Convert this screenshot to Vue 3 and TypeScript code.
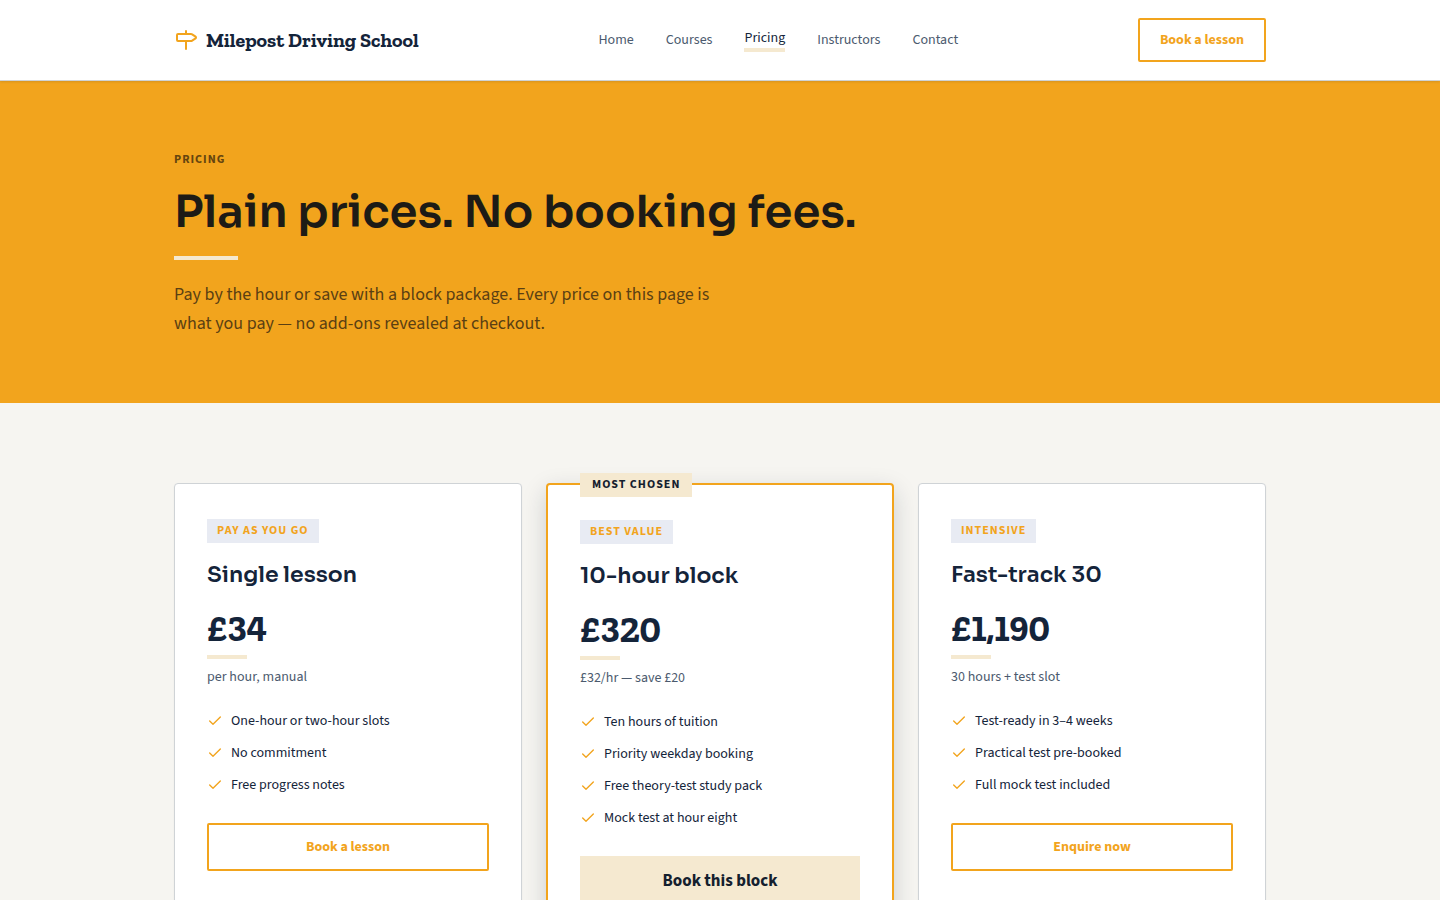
<script setup lang="ts">
interface NavItem {
  label: string
  current?: boolean
}

interface Plan {
  tag: string
  name: string
  price: string
  unit: string
  features: string[]
  action: string
  featured?: boolean
}

const navItems: NavItem[] = [
  { label: 'Home' },
  { label: 'Courses' },
  { label: 'Pricing', current: true },
  { label: 'Instructors' },
  { label: 'Contact' },
]

const plans: Plan[] = [
  {
    tag: 'Pay as you go',
    name: 'Single lesson',
    price: '£34',
    unit: 'per hour, manual',
    features: ['One-hour or two-hour slots', 'No commitment', 'Free progress notes'],
    action: 'Book a lesson',
  },
  {
    tag: 'Best value',
    name: '10-hour block',
    price: '£320',
    unit: '£32/hr — save £20',
    features: [
      'Ten hours of tuition',
      'Priority weekday booking',
      'Free theory-test study pack',
      'Mock test at hour eight',
    ],
    action: 'Book this block',
    featured: true,
  },
  {
    tag: 'Intensive',
    name: 'Fast-track 30',
    price: '£1,190',
    unit: '30 hours + test slot',
    features: ['Test-ready in 3–4 weeks', 'Practical test pre-booked', 'Full mock test included'],
    action: 'Enquire now',
  },
]
</script>

<template>
  <div class="page">
    <header class="site-header">
      <div class="container header-row">
        <a class="brand" href="#">
          <svg class="brand-icon" viewBox="0 0 24 24" aria-hidden="true">
            <path d="M12 13v8" />
            <path d="M12 3v3" />
            <path
              d="M4 6a1 1 0 0 0-1 1v5a1 1 0 0 0 1 1h13a2 2 0 0 0 1.152-.365l3.424-2.317a1 1 0 0 0 0-1.635l-3.424-2.318A2 2 0 0 0 17 6z"
            />
          </svg>
          <span>Milepost Driving School</span>
        </a>
        <nav class="nav" aria-label="Main">
          <a
            v-for="item in navItems"
            :key="item.label"
            href="#"
            class="nav-link"
            :class="{ current: item.current }"
            :aria-current="item.current ? 'page' : undefined"
            >{{ item.label }}</a
          >
        </nav>
        <button type="button" class="button header-button">Book a lesson</button>
      </div>
    </header>

    <main>
      <section class="hero">
        <div class="container">
          <p class="eyebrow">Pricing</p>
          <h1 class="headline">Plain prices. No booking fees.</h1>
          <div class="hero-rule"></div>
          <p class="lead">
            Pay by the hour or save with a block package. Every price on this page is what you pay —
            no add-ons revealed at checkout.
          </p>
        </div>
      </section>

      <section class="plans">
        <div class="container plan-grid">
          <article
            v-for="plan in plans"
            :key="plan.name"
            class="card"
            :class="{ featured: plan.featured }"
          >
            <span v-if="plan.featured" class="ribbon">Most chosen</span>
            <span class="tag">{{ plan.tag }}</span>
            <h2 class="plan-name">{{ plan.name }}</h2>
            <p class="price">{{ plan.price }}</p>
            <p class="unit">{{ plan.unit }}</p>
            <ul class="features">
              <li v-for="feature in plan.features" :key="feature">
                <svg class="check" viewBox="0 0 24 24" aria-hidden="true">
                  <path d="M20 6 9 17l-5-5" />
                </svg>
                <span>{{ feature }}</span>
              </li>
            </ul>
            <button type="button" class="button" :class="{ solid: plan.featured }">
              {{ plan.action }}
            </button>
          </article>
        </div>
      </section>
    </main>
  </div>
</template>

<style>
body {
  margin: 0;
  background: #f6f5f1;
}
</style>

<style scoped>
.page {
  --amber: #f2a41d;
  --navy: #14243a;
  --slate: #4b5a6e;
  --cream: #f5e9d0;
  --body: 'Source Sans 3', 'Source Sans Pro', 'Noto Sans CJK SC', 'Noto Sans', sans-serif;
  --display: Sora, Inter, sans-serif;
  --slab: 'Roboto Slab', 'Roboto Slab Thin', 'Roboto Slab Light', 'Zilla Slab',
    'DejaVu Serif Condensed', 'DejaVu Serif', serif;
  color: var(--navy);
  font-family: var(--body);
  font-size: 14px;
}

.page *,
.page {
  box-sizing: border-box;
}

h1,
h2,
p,
ul {
  margin: 0;
  padding: 0;
}

.container {
  max-width: 1140px;
  margin: 0 auto;
  padding: 0 24px;
}

.site-header {
  position: relative;
  background: #fff;
  border-bottom: 1px solid #cfd3d6;
  box-shadow: 0 1px 2px rgba(20, 36, 58, 0.12);
}

.header-row {
  display: flex;
  align-items: center;
  justify-content: space-between;
  min-height: 80px;
}

.brand {
  display: flex;
  align-items: center;
  gap: 8px;
  color: var(--navy);
  font-family: var(--slab);
  font-size: 20px;
  font-weight: 700;
  line-height: 24px;
  text-decoration: none;
}

.brand-icon,
.check {
  flex: none;
  fill: none;
  stroke: var(--amber);
  stroke-width: 2;
  stroke-linecap: round;
  stroke-linejoin: round;
}

.brand-icon {
  width: 24px;
  height: 24px;
}

.nav {
  display: flex;
  align-items: center;
  gap: 32px;
}

.nav-link {
  color: var(--slate);
  line-height: 20px;
  text-decoration: none;
}

.nav-link.current {
  color: var(--navy);
  border-bottom: 4px solid var(--cream);
}

.button {
  min-height: 48px;
  padding: 0 20px;
  border: 2px solid var(--amber);
  border-radius: 2px;
  background: #fff;
  color: var(--amber);
  font-family: inherit;
  font-size: 14px;
  font-weight: 700;
  line-height: 20px;
  cursor: pointer;
}

.header-button {
  min-height: 44px;
}

.button.solid {
  min-height: 50px;
  border: 0;
  border-radius: 0;
  background: var(--cream);
  color: #14202e;
  font-size: 17px;
}

.hero {
  padding: 64px 0;
  background: var(--amber);
}

.eyebrow {
  color: #65450f;
  font-size: 12px;
  font-weight: 700;
  letter-spacing: 1px;
  line-height: 30px;
  text-transform: uppercase;
}

.headline {
  margin-top: 8px;
  color: #1d1b16;
  font-family: var(--display);
  font-size: 45px;
  font-weight: 600;
  line-height: 57px;
}

.hero-rule {
  width: 64px;
  height: 4px;
  margin-top: 16px;
  background: var(--cream);
}

.lead {
  max-width: 560px;
  margin: 20px 0 1px;
  color: #5a3f13;
  font-size: 18px;
  line-height: 29px;
}

.plans {
  padding: 80px 0;
}

.plan-grid {
  display: grid;
  grid-template-columns: repeat(3, minmax(0, 1fr));
  gap: 24px;
}

.card {
  position: relative;
  display: flex;
  flex-direction: column;
  padding: 35px 32px;
  border: 1px solid #cfd3d6;
  border-radius: 4px;
  background: #fff;
  box-shadow: 0 1px 2px rgba(20, 36, 58, 0.06);
}

.card.featured {
  border: 2px solid var(--amber);
  box-shadow: 0 8px 24px rgba(20, 36, 58, 0.18);
}

.ribbon,
.tag {
  font-size: 12px;
  font-weight: 700;
  letter-spacing: 1px;
  line-height: 24px;
  text-transform: uppercase;
}

.ribbon {
  position: absolute;
  top: -12px;
  left: 32px;
  padding: 0 12px;
  background: var(--cream);
  color: #14202e;
}

.tag {
  align-self: flex-start;
  padding: 0 10px;
  background: #e8ebf3;
  color: var(--amber);
}

.plan-name {
  margin-top: 16px;
  font-family: var(--display);
  font-size: 22px;
  font-weight: 600;
  line-height: 32px;
}

.price {
  margin-top: 16px;
  font-family: var(--slab);
  font-size: 36px;
  font-variant-numeric: lining-nums;
  font-weight: 700;
  line-height: 44px;
}

.price::after {
  display: block;
  width: 40px;
  height: 4px;
  margin-top: 4px;
  background: var(--cream);
  content: '';
}

.unit {
  margin-top: 8px;
  color: var(--slate);
  line-height: 20px;
}

.features {
  display: grid;
  gap: 8px;
  margin: 22px 0 26px;
  list-style: none;
}

.features li {
  display: flex;
  align-items: center;
  gap: 8px;
  line-height: 24px;
}

.check {
  width: 16px;
  height: 16px;
}
</style>
